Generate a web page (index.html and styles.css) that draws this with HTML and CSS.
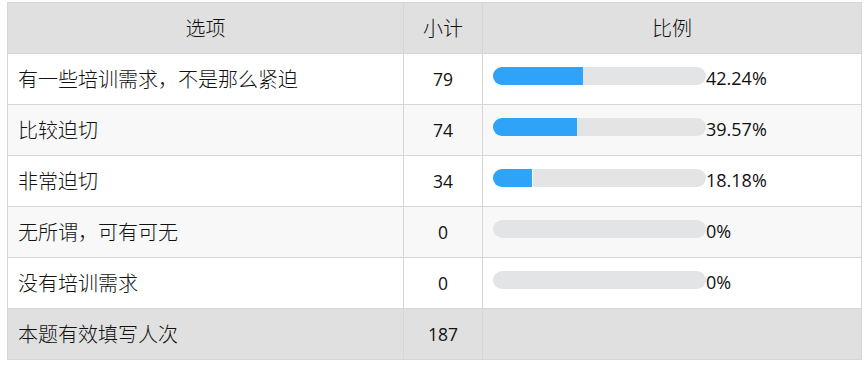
FILE: index.html
```html
<!DOCTYPE html>
<html lang="zh-CN">
<head>
<meta charset="utf-8">
<title>统计</title>
<link rel="stylesheet" href="styles.css">
</head>
<body>
<div class="wrap">
<table class="stats">
  <colgroup>
    <col class="c-opt">
    <col class="c-cnt">
    <col class="c-pct">
  </colgroup>
  <thead>
    <tr class="head">
      <th class="cn">选项</th>
      <th class="cn">小计</th>
      <th class="cn">比例</th>
    </tr>
  </thead>
  <tbody>
    <tr>
      <td class="label">有一些培训需求，不是那么紧迫</td>
      <td class="num">79</td>
      <td class="ratio"><span class="track"><span class="fill" style="width:42.24%"></span></span><span class="pct">42.24%</span></td>
    </tr>
    <tr class="alt">
      <td class="label">比较迫切</td>
      <td class="num">74</td>
      <td class="ratio"><span class="track"><span class="fill" style="width:39.57%"></span></span><span class="pct">39.57%</span></td>
    </tr>
    <tr>
      <td class="label">非常迫切</td>
      <td class="num">34</td>
      <td class="ratio"><span class="track"><span class="fill gap" style="width:18.18%"></span></span><span class="pct">18.18%</span></td>
    </tr>
    <tr class="alt">
      <td class="label">无所谓，可有可无</td>
      <td class="num">0</td>
      <td class="ratio"><span class="track"><span class="fill" style="width:0%"></span></span><span class="pct">0%</span></td>
    </tr>
    <tr>
      <td class="label">没有培训需求</td>
      <td class="num">0</td>
      <td class="ratio"><span class="track"><span class="fill" style="width:0%"></span></span><span class="pct">0%</span></td>
    </tr>
    <tr class="foot">
      <td class="label">本题有效填写人次</td>
      <td class="num">187</td>
      <td class="ratio empty"></td>
    </tr>
  </tbody>
</table>
</div>
</body>
</html>
```

FILE: styles.css
```css
html, body {
  margin: 0;
  padding: 0;
  background: #ffffff;
}

.wrap {
  padding: 2px 0 0 7px;
}

.stats {
  border-collapse: collapse;
  table-layout: fixed;
  width: 854px;
  color: #111111;
  font-family: "Noto Sans CJK SC", "Open Sans", sans-serif;
}

.c-opt { width: 396px; }
.c-cnt { width: 79px; }
.c-pct { width: 379px; }

.stats th,
.stats td {
  border: 1px solid #d6d6d6;
  height: 50px;
  padding: 0;
  vertical-align: middle;
}

.head th {
  background: #e0e0e0;
  font-weight: 300;
  font-size: 20px;
  line-height: 24px;
  text-align: center;
}

.alt td {
  background: #f8f8f8;
}

.foot td {
  background: #e0e0e0;
}

.stats .label {
  font-size: 20px;
  font-weight: 300;
  line-height: 24px;
  padding-left: 10px;
  text-align: left;
}

.num {
  font-family: "Open Sans", sans-serif;
  font-size: 17.5px;
  text-align: center;
  line-height: 24px;
}

.stats .ratio {
  height: 48px;
  padding: 0 0 2px 10px;
  white-space: nowrap;
  line-height: 22px;
}

.track {
  display: inline-block;
  width: 213px;
  height: 18px;
  border-radius: 9px;
  background: #e3e4e6;
  overflow: hidden;
  vertical-align: baseline;
}

.fill {
  display: block;
  height: 100%;
  background: #2ea3f7;
}

.fill.gap {
  border-right: 1px solid #ffffff;
}

.pct {
  font-family: "Open Sans", sans-serif;
  font-size: 18px;
  color: #111111;
}
```
